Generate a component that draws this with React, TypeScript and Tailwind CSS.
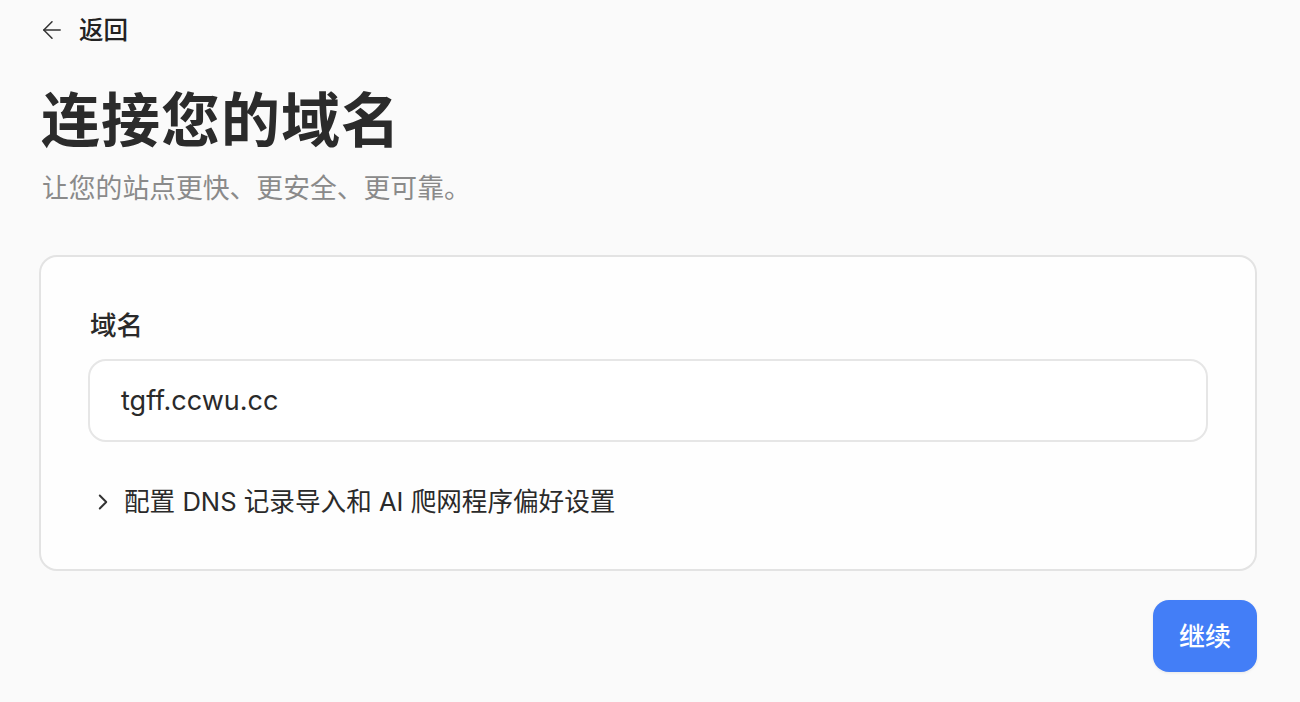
import { ArrowLeft, ChevronRight } from 'lucide-react';

const FONT = "font-['Inter','Noto_Sans_CJK_SC',sans-serif]";

export default function App() {
  return (
    <div className={`min-h-[702px] w-full bg-[#fafafa] ${FONT} text-[#2a2a2a]`}>
      <div className="ml-[39px] w-[1218px] pt-[14px]">
        {/* Back link */}
        <button type="button" className="flex items-center gap-[13px] h-[32px]">
          <ArrowLeft className="w-[28px] h-[28px] -ml-[1px] text-[#333]" strokeWidth={1.3} />
          <span className="text-[24.5px] font-medium leading-none text-[#222]">返回</span>
        </button>

        {/* Heading */}
        <h1 className="mt-[40px] pl-[2px] text-[59px] font-bold leading-[70px] tracking-[1px] text-[#2b2b2b]">
          连接您的域名
        </h1>
        <p className="mt-[14px] pl-[3px] text-[26.8px] leading-[36px] text-[#8a8a8a]">
          让您的站点更快、更安全、更可靠。
        </p>

        {/* Card */}
        <section className="mt-[49px] h-[316px] rounded-[18px] border-2 border-[#e3e3e3] bg-white/80 px-[47px] pt-[50px]">
          <label className="block text-[26.5px] font-medium leading-[36px] text-[#2a2a2a] pl-[2px]">域名</label>
          <div className="mt-[16px] h-[83px] rounded-[18px] border-2 border-[#e6e6e6] bg-white flex items-center px-[31px]">
            <span className="text-[27px] leading-none text-[#2a2a2a]">tgff.ccwu.cc</span>
          </div>
          <button type="button" className="mt-[44px] flex items-center gap-[8px] pl-[2px]">
            <ChevronRight className="w-[26px] h-[26px] text-[#333]" strokeWidth={1.8} />
            <span className="text-[25.6px] leading-[32px] text-[#2a2a2a]">配置 DNS 记录导入和 AI 爬网程序偏好设置</span>
          </button>
        </section>

        {/* Footer */}
        <div className="mt-[29px] flex justify-end">
          <button
            type="button"
            className="h-[72px] w-[104px] rounded-[16px] bg-[#437ef7] text-white text-[26px] font-medium shadow-[0_1px_3px_rgba(0,0,0,0.08)]"
          >
            继续
          </button>
        </div>
      </div>
    </div>
  );
}
